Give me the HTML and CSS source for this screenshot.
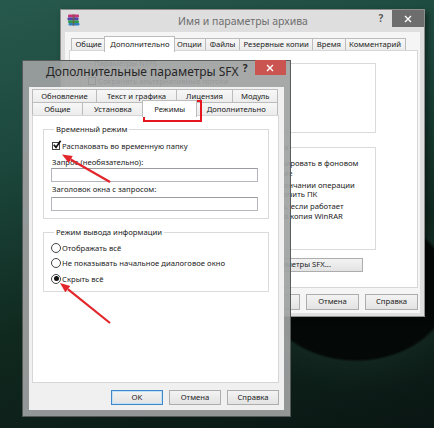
FILE: index.html
```html
<!DOCTYPE html>
<html lang="ru">
<head>
    <meta charset="UTF-8">
    <title>Дополнительные параметры SFX</title>
    <link rel="stylesheet" href="styles.css">
</head>
<body>
    <!-- archive options dialog (inactive, behind) -->
    <div class="window archive">
        <div class="titlebar">
            <svg class="app-icon" width="13" height="12" viewBox="0 0 13 12">
                <rect x="1" y="0.5" width="11" height="3" rx="1" fill="#c8327a"/>
                <rect x="0.5" y="3.5" width="11" height="3" rx="1" fill="#4b49a8"/>
                <rect x="1" y="6.5" width="11" height="2.5" rx="1" fill="#2e9a48"/>
                <rect x="1.5" y="9" width="11" height="2.5" rx="1" fill="#2f7fc0"/>
                <rect x="5.5" y="0.3" width="2" height="11.4" fill="#7a5b3a" opacity="0.6"/>
            </svg>
            <span class="title">Имя и параметры архива</span>
            <span class="help">?</span>
            <span class="close">
                <svg width="8" height="8" viewBox="0 0 8 8"><path d="M1 1L7 7M7 1L1 7" stroke="#fff" stroke-width="1.4"/></svg>
            </span>
        </div>
        <div class="client">
            <div class="tab-row">
                <span class="tab">Общие</span>
                <span class="tab active">Дополнительно</span>
                <span class="tab">Опции</span>
                <span class="tab">Файлы</span>
                <span class="tab">Резервные копии</span>
                <span class="tab">Время</span>
                <span class="tab">Комментарий</span>
            </div>
            <div class="panel">
                <div class="group ntfs">
                    <div class="group-title">Параметры NTFS</div>
                    <div class="option"><span class="check"></span>Сохранять альтернативные потоки</div>
                </div>
                <div class="columns">
                    <div></div>
                    <div>
                        <div class="group system">
                            <div class="group-title">Система</div>
                            <div class="option wrap"><span class="check"></span><span>Архивировать в фоновом режиме</span></div>
                            <div class="option wrap"><span class="check"></span><span>По окончании операции выключить ПК</span></div>
                            <div class="option wrap"><span class="check"></span><span>Ждать, если работает другая копия WinRAR</span></div>
                        </div>
                        <button class="btn sfx-btn">Параметры SFX...</button>
                    </div>
                </div>
            </div>
            <div class="buttons">
                <button class="btn">OK</button>
                <button class="btn">Отмена</button>
                <button class="btn">Справка</button>
            </div>
        </div>
    </div>

    <!-- SFX options dialog (active) -->
    <div class="window sfx">
        <div class="titlebar">
            <span class="title">Дополнительные параметры SFX</span>
            <span class="help">?</span>
            <span class="close">
                <svg width="8" height="8" viewBox="0 0 8 8"><path d="M1 1L7 7M7 1L1 7" stroke="#fff" stroke-width="1.4"/></svg>
            </span>
        </div>
        <div class="client">
            <div class="tabs">
                <div class="tab-row back-row">
                    <span class="tab">Обновление</span>
                    <span class="tab">Текст и графика</span>
                    <span class="tab">Лицензия</span>
                    <span class="tab">Модуль</span>
                </div>
                <div class="tab-row">
                    <span class="tab">Общие</span>
                    <span class="tab">Установка</span>
                    <span class="tab active">Режимы</span>
                    <span class="tab">Дополнительно</span>
                </div>
            </div>
            <div class="panel">
                <div class="group temp">
                    <div class="group-title">Временный режим</div>
                    <div class="option">
                        <span class="check on">
                            <svg width="10" height="10" viewBox="0 0 10 10"><path d="M1.8 4.8L4 7.4L8.6 0.8" fill="none" stroke="#111" stroke-width="1.7"/></svg>
                        </span>
                        Распаковать во временную папку
                    </div>
                    <div class="caption">Запрос (необязательно):</div>
                    <input class="field" type="text">
                    <div class="caption">Заголовок окна с запросом:</div>
                    <input class="field" type="text">
                </div>
                <div class="group output">
                    <div class="group-title">Режим вывода информации</div>
                    <div class="radios">
                        <div class="option radio-row"><span class="radio"></span>Отображать всё</div>
                        <div class="option radio-row"><span class="radio"></span>Не показывать начальное диалоговое окно</div>
                        <div class="option radio-row"><span class="radio on"></span>Скрыть всё</div>
                    </div>
                </div>
            </div>
            <div class="buttons">
                <button class="btn default">OK</button>
                <button class="btn">Отмена</button>
                <button class="btn">Справка</button>
            </div>
        </div>
    </div>

    <!-- red marks over the dialog -->
    <svg class="marks" width="434" height="428" viewBox="0 0 434 428">
        <rect x="144" y="101" width="57" height="20" fill="none" stroke="#e5161d" stroke-width="2"/>
        <line x1="110" y1="182" x2="70.7" y2="159.5" stroke="#e2262b" stroke-width="2.2"/>
        <polygon points="62,154.5 68.7,163 72.7,156" fill="#e2262b"/>
        <line x1="110" y1="323" x2="67.8" y2="289.2" stroke="#e2262b" stroke-width="2.2"/>
        <polygon points="60,283 65.3,292.3 70.3,286.1" fill="#e2262b"/>
    </svg>
</body>
</html>
```

FILE: styles.css
```css
/* Desktop */
* {
    box-sizing: border-box;
}

body {
    margin: 0;
    width: 434px;
    height: 428px;
    overflow: hidden;
    position: relative;
    font-family: "Noto Sans", "DejaVu Sans", sans-serif;
    font-size: 7.7px;
    color: #1b1b1b;
    background:
        radial-gradient(ellipse 96px 74px at 356px 288px, #040807 96%, rgba(4, 8, 7, 0) 100%),
        radial-gradient(ellipse 130px 100px at 356px 292px, rgba(48, 80, 72, 0.45), rgba(0, 0, 0, 0) 100%),
        linear-gradient(165deg, #27594c 0%, #1c473c 30%, #10291f 62%, #0a1613 100%);
}

button,
input {
    font: inherit;
    color: inherit;
}

/* Windows */
.window {
    position: absolute;
    display: flex;
    flex-direction: column;
}

.titlebar {
    display: flex;
    align-items: center;
    flex: none;
}

.title {
    flex: 1;
    white-space: nowrap;
}

.help {
    font-weight: bold;
    font-size: 10px;
    text-align: center;
    color: #3a3a3a;
}

.close {
    display: flex;
    align-items: center;
    justify-content: center;
    align-self: flex-start;
}

.client {
    flex: 1;
    display: flex;
    flex-direction: column;
}

/* archive dialog */
.archive {
    left: 60px;
    top: 9px;
    width: 365px;
    height: 308px;
    background: #dedede;
    border: 1px solid #8e8e8e;
    padding: 0 4px 3px;
    box-shadow: 3px 3px 6px rgba(0, 0, 0, 0.45);
}

.archive .titlebar {
    height: 22px;
}

.archive .app-icon {
    margin-left: 2px;
    margin-bottom: 3px;
}

.archive .title {
    font-size: 10.5px;
    text-align: center;
    padding-left: 33px;
    color: #6e6e6e;
}

.archive .help {
    width: 16px;
    line-height: 17px;
    align-self: flex-start;
    color: #5a5a5a;
}

.archive .close {
    width: 32px;
    height: 17px;
    margin-left: 3px;
    margin-right: -4px;
    background: #6d6d6d;
}

.archive .client {
    background: #f5f5f5;
    padding: 4px 2px 3px 4px;
}

.archive .tab-row {
    display: flex;
    align-items: flex-end;
    height: 14px;
    padding-left: 3px;
}

.archive .tab {
    height: 12px;
    padding: 0 3.5px;
}

.archive .tab.active {
    height: 16px;
    margin: 0 -2px -2px;
    padding: 0 5px;
    line-height: 14px;
}

.archive .panel {
    padding: 12px 41px 0 10px;
}

.ntfs {
    height: 70px;
    padding-left: 7px;
}

.ntfs .group-title {
    margin-left: 4px;
}

.ntfs .option {
    margin-top: 6px;
}

.columns {
    display: grid;
    grid-template-columns: 158px 131px;
    column-gap: 7px;
    margin-top: 14px;
}

.system {
    height: 103px;
    padding: 0 6px 0 6px;
}

.system .group-title {
    margin-left: 3px;
}

.option.wrap {
    align-items: flex-start;
    line-height: 9.5px;
    margin-top: 2.5px;
    gap: 3px;
}

.option.wrap:nth-child(2) {
    margin-top: 6px;
}

.option.wrap .check {
    margin-top: 0.5px;
}

.btn.sfx-btn {
    display: block;
    width: 128px;
    height: 14px;
    margin: 8px 0 0 -10px;
}

/* SFX dialog */
.sfx {
    left: 22px;
    top: 60px;
    width: 269px;
    height: 357px;
    background: rgba(160, 162, 162, 0.92);
    border: 1px solid rgba(70, 72, 72, 0.8);
    padding: 0 6px 6px;
}

.sfx .titlebar {
    height: 26px;
    align-items: flex-start;
}

.sfx .title {
    font-size: 12px;
    padding-left: 17px;
    line-height: 22px;
    color: #262626;
}

.sfx .help {
    width: 14px;
    line-height: 15px;
    color: #262626;
}

.sfx .close {
    width: 33px;
    height: 15px;
    margin: -1px -2px 0 3px;
    background: #c95450;
}

.sfx .client {
    background: #f0f0f0;
    padding: 2px 5px 5px 3px;
}

.tabs {
    margin: 0 1px;
}

.sfx .tab-row {
    display: flex;
    height: 13px;
}

.sfx .tab {
    flex: 1 1 auto;
    height: 13px;
    padding: 0 8px;
    line-height: 12px;
}

/* upper tab row keeps the widths the dialog gives it */
.back-row .tab:nth-child(1) {
    flex: 0 0 65px;
}

.back-row .tab:nth-child(2) {
    flex: 0 0 81px;
}

.back-row .tab:nth-child(3) {
    flex: 0 0 57px;
}

.back-row .tab:nth-child(4) {
    flex: 1 1 auto;
}

.sfx .tab.active {
    align-self: flex-start;
    height: 17px;
    margin: -2px -2px -2px;
    line-height: 16px;
}

/* Tabs */
.tab {
    border: 1px solid #bcbcbc;
    border-bottom: none;
    margin-left: -1px;
    text-align: center;
    white-space: nowrap;
    line-height: 11px;
    background: linear-gradient(#f7f7f7, #ececec);
}

.tab.active {
    position: relative;
    z-index: 1;
    background: #fff;
}

.panel {
    flex: 1;
    background: #fff;
    border: 1px solid #d6d6d6;
}

.sfx .panel {
    padding: 13px 9px 0 10px;
}

/* Group boxes */
.group {
    border: 1px solid #dadada;
}

.group-title {
    display: table;
    margin: -6px 0 0 2px;
    padding: 0 2px;
    line-height: 11px;
    background: #fff;
}

.temp {
    padding: 0 10px 7px 8px;
}

.output {
    margin-top: 13px;
    padding: 0 10px 4px 8px;
}

.option {
    display: flex;
    align-items: center;
    gap: 2px;
    height: 12px;
    white-space: nowrap;
}

.option.wrap {
    height: auto;
    white-space: normal;
}

.temp .option {
    margin-top: 5px;
}

.check {
    flex: none;
    position: relative;
    width: 8px;
    height: 8px;
    border: 1px solid #444;
    background: #fff;
}

.check svg {
    position: absolute;
    left: -1px;
    top: -3px;
}

.caption {
    margin-top: 5px;
    line-height: 11px;
}

.caption + .field + .caption {
    margin-top: 2px;
}

.field {
    display: block;
    width: 207px;
    height: 14px;
    margin: 0 0 0 -1px;
    padding: 0;
    border: 1px solid #b5b7bd;
    border-top-color: #9a9ca2;
    background: #fff;
}

.caption + .field:last-child {
    margin-top: 2px;
}

.radios {
    margin-top: 2px;
}

.radio-row {
    height: 15.5px;
    gap: 1px;
}

.radio {
    flex: none;
    width: 10px;
    height: 10px;
    margin-left: -1px;
    border: 1px solid #444;
    border-radius: 50%;
    background: #fff;
    display: flex;
    align-items: center;
    justify-content: center;
}

.radio.on::after {
    content: "";
    width: 5px;
    height: 5px;
    border-radius: 50%;
    background: #111;
}

/* Buttons */
.buttons {
    display: flex;
    justify-content: flex-end;
    gap: 6px;
    flex: none;
}

.btn {
    width: 53px;
    padding: 0;
    border: 1px solid #adadad;
    background: linear-gradient(#f3f3f3, #e3e3e3);
    line-height: 1;
}

.archive .buttons {
    margin-top: 6px;
    height: 16px;
}

.sfx .buttons {
    margin-top: 7px;
    height: 15px;
}

.sfx .buttons .btn {
    width: 52px;
}

.btn.default {
    border-color: #3f87c9;
    box-shadow: inset 0 0 0 1px #bfe0f7;
}

/* red marks */
.marks {
    position: absolute;
    left: 0;
    top: 0;
    pointer-events: none;
}
```
